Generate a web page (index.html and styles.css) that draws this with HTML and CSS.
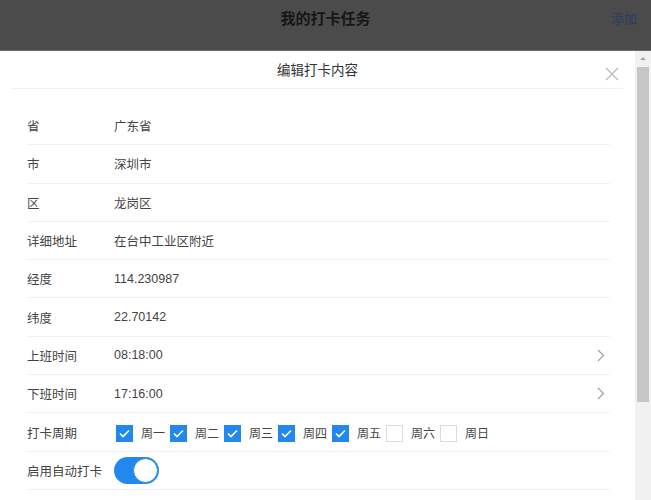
FILE: index.html
```html
<!DOCTYPE html>
<html lang="zh-CN">
<head>
    <meta charset="UTF-8">
    <meta name="viewport" content="width=device-width, initial-scale=1.0">
    <title>我的打卡任务</title>
    <link rel="stylesheet" href="styles.css">
</head>
<body>
    <header class="top-bar">
        <h1 class="top-title">我的打卡任务</h1>
        <span class="top-add">添加</span>
    </header>

    <div class="modal">
        <div class="modal-main">
            <div class="modal-head">
                <span class="modal-title">编辑打卡内容</span>
                <svg class="modal-close" width="14" height="14" viewBox="0 0 14 14">
                    <path d="M1 1 L13 13 M13 1 L1 13" stroke="#bdbdbd" stroke-width="1.4" fill="none"/>
                </svg>
            </div>

            <div class="form-list">
                <div class="form-row"><span class="form-label">省</span><span class="form-value">广东省</span></div>
                <div class="form-row"><span class="form-label">市</span><span class="form-value">深圳市</span></div>
                <div class="form-row"><span class="form-label">区</span><span class="form-value">龙岗区</span></div>
                <div class="form-row"><span class="form-label">详细地址</span><span class="form-value">在台中工业区附近</span></div>
                <div class="form-row"><span class="form-label">经度</span><span class="form-value">114.230987</span></div>
                <div class="form-row"><span class="form-label">纬度</span><span class="form-value">22.70142</span></div>
                <div class="form-row">
                    <span class="form-label">上班时间</span><span class="form-value">08:18:00</span>
                    <svg class="chevron" width="8" height="13" viewBox="0 0 8 13"><path d="M1 1 L6.5 6.5 L1 12" stroke="#a0a0a0" stroke-width="1.2" fill="none"/></svg>
                </div>
                <div class="form-row">
                    <span class="form-label">下班时间</span><span class="form-value">17:16:00</span>
                    <svg class="chevron" width="8" height="13" viewBox="0 0 8 13"><path d="M1 1 L6.5 6.5 L1 12" stroke="#a0a0a0" stroke-width="1.2" fill="none"/></svg>
                </div>
                <div class="form-row">
                    <span class="form-label">打卡周期</span>
                    <div class="week-list" id="week-list"></div>
                </div>
                <div class="form-row">
                    <span class="form-label">启用自动打卡</span>
                    <span class="toggle on"><span class="toggle-knob"></span></span>
                </div>
            </div>
        </div>

        <div class="scrollbar">
            <div class="scroll-arrow"></div>
            <div class="scroll-thumb"></div>
        </div>
    </div>

    <script>
        const days = ['周一', '周二', '周三', '周四', '周五', '周六', '周日'];
        const checkedDays = 5;
        const weekList = document.getElementById('week-list');

        days.forEach((day, i) => {
            const item = document.createElement('label');
            item.classList.add('week-item');

            const box = document.createElement('span');
            box.classList.add('check-box');
            if (i < checkedDays) {
                box.classList.add('checked');
                box.innerHTML = '<svg width="11" height="9" viewBox="0 0 11 9"><path d="M1 4.5 L4 7.5 L10 1.5" stroke="#fff" stroke-width="1.6" fill="none"/></svg>';
            }

            const text = document.createElement('span');
            text.classList.add('week-text');
            text.textContent = day;

            item.appendChild(box);
            item.appendChild(text);
            weekList.appendChild(item);
        });
    </script>
</body>
</html>
```

FILE: styles.css
```css
:root {
    --bar-bg: #4b4b4b;
    --text-color: #444;
    --line-color: #f1f1f1;
    --blue: #2288ee;
    --track-bg: #f1f1f1;
    --thumb-bg: #c6c6c6;
}

* {
    box-sizing: border-box;
}

body {
    margin: 0;
    height: 500px;
    overflow: hidden;
    font-family: "Liberation Sans", "Noto Sans CJK SC", sans-serif;
    color: var(--text-color);
    background: #fff;
}

.top-bar {
    position: relative;
    height: 51px;
    background: var(--bar-bg);
    border-bottom: 1px solid #6a6a6a;
}

.top-title {
    margin: 0;
    line-height: 38px;
    text-align: center;
    font-size: 15px;
    font-weight: bold;
    color: #161616;
}

.top-add {
    position: absolute;
    right: 14px;
    top: 0;
    line-height: 38px;
    font-size: 13px;
    color: #2b3d63;
}

.modal {
    display: flex;
    height: 449px;
}

.modal-main {
    flex: 1;
}

.modal-head {
    position: relative;
    height: 38px;
    margin: 0 12px;
    padding-top: 4px;
    border-bottom: 1px solid var(--line-color);
    text-align: center;
}

.modal-title {
    font-size: 13.5px;
    line-height: 32px;
    color: #333;
}

.modal-close {
    position: absolute;
    right: 4px;
    top: 16px;
}

.form-list {
    margin: 18px 25px 0 27px;
}

.form-row {
    display: flex;
    align-items: center;
    height: 38.3px;
    border-bottom: 1px solid var(--line-color);
    font-size: 12.5px;
}

.form-label {
    width: 87px;
    flex-shrink: 0;
}

.form-value {
    flex: 1;
}

.chevron {
    margin-right: 5px;
}

.week-list {
    display: flex;
    align-items: center;
    padding-left: 2px;
}

.week-item {
    display: flex;
    align-items: center;
    margin-right: 3px;
}

.check-box {
    display: flex;
    align-items: center;
    justify-content: center;
    width: 17px;
    height: 17px;
    margin-top: 2px;
    border: 1px solid #dcdcdc;
    background: #fff;
}

.check-box.checked {
    background: var(--blue);
    border-color: var(--blue);
}

.week-text {
    width: 26px;
    margin-left: 8px;
    font-size: 12px;
}

.toggle {
    position: relative;
    display: inline-block;
    width: 45px;
    height: 27px;
    border-radius: 14px;
    background: #ddd;
}

.toggle.on {
    background: var(--blue);
}

.toggle-knob {
    position: absolute;
    right: 1px;
    top: 1px;
    width: 25px;
    height: 25px;
    border-radius: 50%;
    background: #fff;
    border: 1.5px solid var(--blue);
}

.scrollbar {
    width: 16px;
    background: var(--track-bg);
    padding: 0 2px 0 2px;
}

.scroll-arrow {
    width: 0;
    height: 0;
    margin: 6px auto 7px;
    border-left: 3px solid transparent;
    border-right: 3px solid transparent;
    border-bottom: 3px solid #a3a3a3;
}

.scroll-thumb {
    height: 335px;
    background: var(--thumb-bg);
}
```
